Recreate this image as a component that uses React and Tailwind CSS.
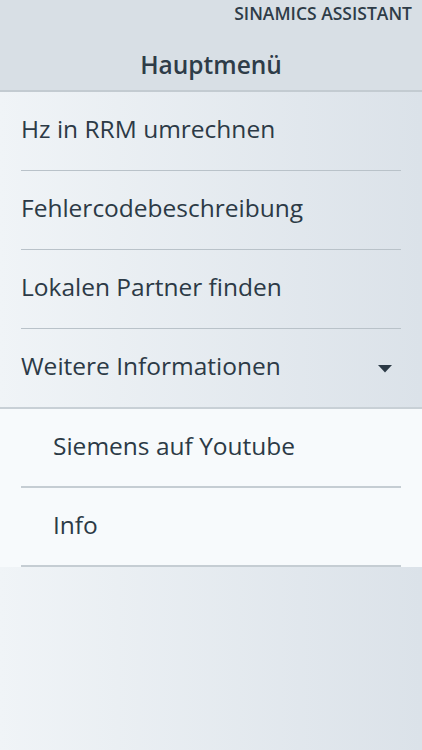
const mainItems = [
  "Hz in RRM umrechnen",
  "Fehlercodebeschreibung",
  "Lokalen Partner finden",
];

const subItems = ["Siemens auf Youtube", "Info"];

function Divider() {
  return <div className="mx-[21px] h-px bg-[#b9c2c9]" />;
}

export default function App() {
  return (
    <div
      className="min-h-[750px] w-full bg-gradient-to-r from-[#f0f4f7] to-[#dbe2e9] text-[#2c3a46]"
      style={{ fontFamily: '"Open Sans", "Noto Sans", sans-serif' }}
    >
      <header className="h-[92px] bg-[#d8dfe5] border-b-2 border-[#c3cbd1] flex flex-col">
        <div className="h-[27px] flex items-center justify-end pr-[10px]">
          <span className="text-[17.5px] font-semibold leading-none text-[#2e3c48]">
            SINAMICS ASSISTANT
          </span>
        </div>
        <div className="flex-1 flex items-center justify-center pt-[14px]">
          <h1 className="text-[24.5px] font-semibold leading-none text-[#2e3c48]">Hauptmenü</h1>
        </div>
      </header>

      <nav>
        {mainItems.map((label) => (
          <div key={label}>
            <div className="h-[78px] flex items-center px-[21px] pb-[3px]">
              <span className="text-[24.5px] leading-none">{label}</span>
            </div>
            <Divider />
          </div>
        ))}

        <div className="h-[78px] flex items-center justify-between pl-[21px] pr-[30px] pb-[3px]">
          <span className="text-[24.5px] leading-none">Weitere Informationen</span>
          <svg width="14" height="8" viewBox="0 0 14 8" className="mt-[4px]">
            <polygon points="0,0 14,0 7,7.5" fill="#2c3a46" />
          </svg>
        </div>

        <div className="bg-[#f7fafc] border-t-2 border-[#c8d0d6]">
          {subItems.map((label) => (
            <div key={label}>
              <div className="h-[77px] flex items-center pl-[53px] pr-[21px] pb-[3px]">
                <span className="text-[24.5px] leading-none">{label}</span>
              </div>
              <div className="mx-[21px] h-[2px] bg-[#c5cdd3]" />
            </div>
          ))}
        </div>
      </nav>
    </div>
  );
}
